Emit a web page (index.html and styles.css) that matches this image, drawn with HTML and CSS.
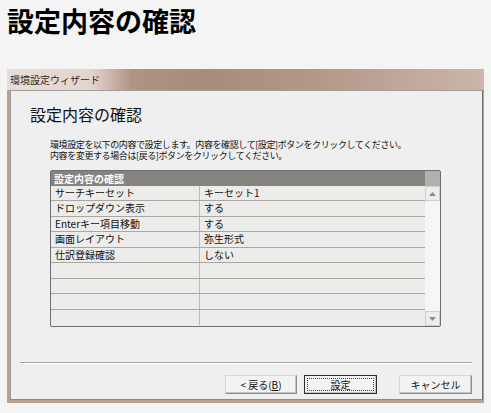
FILE: index.html
```html
<!DOCTYPE html>
<html lang="ja">
<head>
<meta charset="utf-8">
<title>設定内容の確認</title>
<link rel="stylesheet" href="styles.css">
</head>
<body>
<h1 class="page-title">設定内容の確認</h1>
<div class="window">
  <div class="titlebar">環境設定ウィザード</div>
  <div class="frame">
    <div class="panel">
      <h2 class="heading">設定内容の確認</h2>
      <p class="desc">環境設定を以下の内容で設定します。内容を確認して[設定]ボタンをクリックしてください。<br>内容を変更する場合は[戻る]ボタンをクリックしてください。</p>
      <div class="table">
        <div class="grid">
          <div class="head">設定内容の確認</div>
          <div class="row"><div class="c1">サーチキーセット</div><div class="c2">キーセット1</div></div>
          <div class="row"><div class="c1">ドロップダウン表示</div><div class="c2">する</div></div>
          <div class="row"><div class="c1">Enterキー項目移動</div><div class="c2">する</div></div>
          <div class="row"><div class="c1">画面レイアウト</div><div class="c2">弥生形式</div></div>
          <div class="row"><div class="c1">仕訳登録確認</div><div class="c2">しない</div></div>
          <div class="row"><div class="c1"></div><div class="c2"></div></div>
          <div class="row"><div class="c1"></div><div class="c2"></div></div>
          <div class="row"><div class="c1"></div><div class="c2"></div></div>
          <div class="row"><div class="c1"></div><div class="c2"></div></div>
        </div>
        <div class="scroll">
          <div class="scroll-head"></div>
          <div class="sbtn"><svg width="7" height="4" viewBox="0 0 7 4"><path d="M0 4 L3.5 0 L7 4 Z" fill="#8a8a8a"/></svg></div>
          <div class="track"></div>
          <div class="sbtn"><svg width="7" height="4" viewBox="0 0 7 4"><path d="M0 0 L3.5 4 L7 0 Z" fill="#8a8a8a"/></svg></div>
        </div>
      </div>
      <div class="sep"></div>
      <div class="buttons">
        <div class="btn">&lt; 戻る(<u>B</u>)</div>
        <div class="btn focus"><span class="focus-ring">設定</span></div>
        <div class="btn cancel">キャンセル</div>
      </div>
    </div>
  </div>
</div>
</body>
</html>
```

FILE: styles.css
```css
* { box-sizing: border-box; }
body {
  margin: 0;
  background: #f4f4f4;
  font-family: "Noto Sans CJK JP", "Liberation Sans", sans-serif;
  color: #111;
  width: 491px;
  height: 413px;
  overflow: hidden;
}
.page-title {
  margin: 0;
  padding: 3px 0 0 7px;
  font-size: 27px;
  font-weight: bold;
  line-height: 36px;
  height: 69px;
  color: #000;
}
.window {
  margin-left: 7px;
  width: 477px;
  height: 334px;
  display: flex;
  flex-direction: column;
}
.titlebar {
  height: 21px;
  padding-left: 3px;
  font-size: 10px;
  line-height: 21px;
  color: #2a2a2a;
  background: linear-gradient(to right, #e8ddd6 0, #e2d5cc 85px, #b09383 125px, #a98b7a 200px, #b49887 65%, #cbb6a9 100%);
}
.frame {
  flex: 1;
  background: #b9a192;
  padding: 0 1px 3px 3px;
  display: flex;
}
.panel {
  flex: 1;
  background: #efefef;
  border-top: 1px solid #9d9d9d;
  border-left: 1px solid #9d9d9d;
  border-right: 1px solid #6f6f6f;
  border-bottom: 1px solid #8a8a8a;
  display: flex;
  flex-direction: column;
}
.heading {
  margin: 12px 0 0 19px;
  font-size: 16px;
  font-weight: normal;
  line-height: 22px;
  color: #111;
}
.desc {
  margin: 14px 0 0 39px;
  font-size: 9px;
  line-height: 11px;
  letter-spacing: -0.4px;
  color: #111;
}
.table {
  margin: 9px 0 0 39px;
  width: 391px;
  height: 157px;
  border: 1px solid #6e6e6e;
  border-radius: 2px;
  display: flex;
  background: #ececea;
}
.grid {
  flex: 1;
  display: flex;
  flex-direction: column;
}
.head {
  height: 15px;
  background: #86847f;
  color: #fff;
  font-size: 10px;
  font-weight: bold;
  line-height: 15px;
  padding-left: 3px;
}
.row {
  display: flex;
  height: 15px;
  border-bottom: 1px solid #aba6a1;
  font-size: 10px;
  line-height: 14px;
}
.row:nth-child(odd) { height: 16px; }
.row:last-child { border-bottom: none; }
.c1 {
  width: 149px;
  padding-left: 4px;
  border-right: 1px solid #bdbab6;
}
.c2 {
  flex: 1;
  padding-left: 4px;
}
.scroll {
  width: 15px;
  display: flex;
  flex-direction: column;
  background: #f6f6f6;
}
.scroll-head {
  height: 15px;
  background: #b2b0ac;
}
.sbtn {
  height: 15px;
  background: #ededed;
  border: 1px solid #cfcfcf;
  display: flex;
  align-items: center;
  justify-content: center;
}
.track { flex: 1; }
.sep {
  margin: 35px 10px 0 9px;
  height: 2px;
  border-top: 1px solid #a0a0a0;
  border-bottom: 1px solid #ffffff;
}
.buttons {
  margin: 11px 10px 0 0;
  display: flex;
  justify-content: flex-end;
}
.btn {
  width: 72px;
  height: 19px;
  background: #f3f3f3;
  border: 1px solid #8e8e8e;
  border-top-color: #d6d6d6;
  border-left-color: #d6d6d6;
  box-shadow: inset -1px -1px 0 #c4c4c4;
  font-size: 10px;
  line-height: 17px;
  text-align: center;
  color: #111;
}
.btn + .btn { margin-left: 7px; }
.btn.cancel { margin-left: 22px; width: 73px; }
.btn.focus {
  width: 73px;
  border: 1px solid #2c2c2c;
  padding: 2px;
}
.focus-ring {
  display: block;
  height: 13px;
  border: 1px dotted #444;
  line-height: 11px;
}
```
